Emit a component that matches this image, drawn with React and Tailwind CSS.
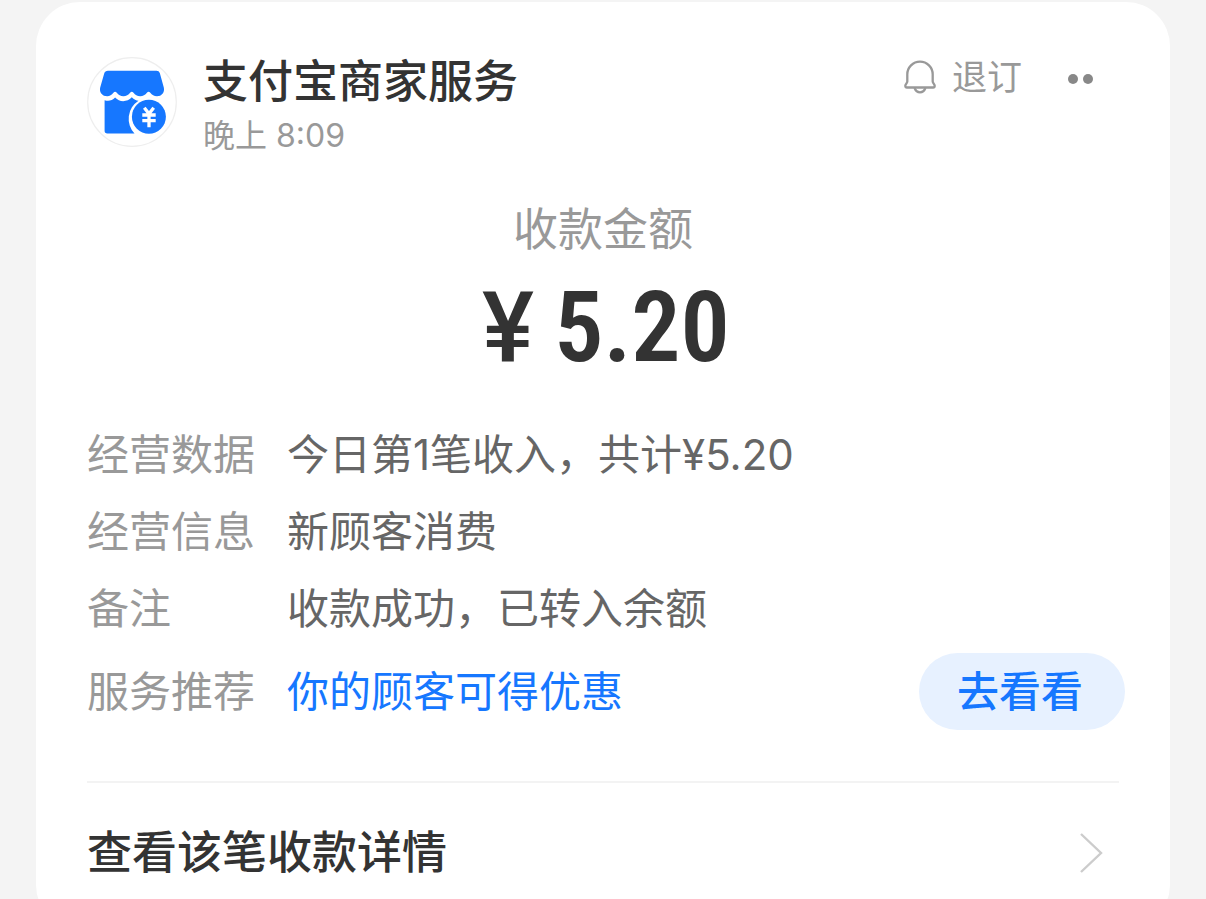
const rows = [
  { label: "经营数据", value: "今日第1笔收入，共计¥5.20" },
  { label: "经营信息", value: "新顾客消费" },
  { label: "备注", value: "收款成功，已转入余额" },
];

function MerchantLogo() {
  return (
    <svg viewBox="0 0 90 90" className="size-[90px] shrink-0" aria-hidden="true">
      <circle cx="45" cy="45" r="44.3" fill="#fff" stroke="#eeeeee" strokeWidth="1.2" />
      <path
        d="M21 13.800H69.500Q72 13.800 72.800 16L76.800 30.500C78 35.500 74.500 39.300 70 39.300C67 39.300 65 37.800 63.300 35.700Q61.600 33.800 59.900 35.700C58.300 37.800 56 39.300 53.200 39.300C50.200 39.300 48.200 37.800 46.500 35.700Q44.800 33.800 43.100 35.700C41.500 37.800 39.200 39.300 36.400 39.300C33.600 39.300 31.500 37.800 29.800 35.700Q28.100 33.800 26.400 35.700C24.700 37.800 22.800 39.300 20.200 39.300C15.500 39.300 12 35.500 13.200 30.500L17.200 16.500Q18 13.800 21 13.800Z"
        fill="#1677ff"
      />
      <path
        d="M17.600 43.200C21.500 44.400 25 43.800 28.100 40.500C32.500 45.400 40 45.400 44.800 40.300C47 42.500 49.200 43.600 51.500 43.700A21.500 21.500 0 0 0 47.500 76.500H20.300Q17.600 76.500 17.600 73.800Z"
        fill="#1677ff"
      />
      <circle cx="61.900" cy="59.700" r="17" fill="#1677ff" />
      <path
        d="M57.300 50.800l4.700 6 4.700-6M55.300 58h13.400M55.300 63.700h13.400M62 56v14.300"
        fill="none"
        stroke="#fff"
        strokeWidth="3.300"
      />
    </svg>
  );
}

function BellIcon() {
  return (
    <svg viewBox="0 0 32 34" className="h-[34px] w-8" fill="none" stroke="currentColor" strokeWidth="2.300" aria-hidden="true">
      <path d="M3.300 21.500V14.300a12.700 12.700 0 0 1 25.400 0v7.200c0 1.600 2 2.600 2 4.300 0 1.200-.6 1.700-1.600 1.700H2.900c-1 0-1.600-.5-1.600-1.700 0-1.700 2-2.700 2-4.300Z" />
      <path d="M10.500 28c1.200 3 3 4.300 5.500 4.300s4.300-1.300 5.500-4.300" />
    </svg>
  );
}

export default function App() {
  return (
    <main className="h-screen overflow-y-auto bg-[#f4f4f4] px-9 pt-[2px] font-['Inter','Noto_Sans_CJK_SC',sans-serif] [scrollbar-width:none]">
      <article className="rounded-[44px] bg-white pr-[45px] pb-[52px] pl-[51px]">
        <header className="flex items-start pt-[55px]">
          <MerchantLogo />
          <div className="ml-[26px] flex-1">
            <h1 className="text-[45px] leading-[50px] font-medium text-[#333]">支付宝商家服务</h1>
            <p className="mt-[7px] text-[32px] leading-[44px] text-[#999]">晚上 8:09</p>
          </div>
          <button type="button" className="flex items-center gap-4 text-[35px] leading-[40px] text-[#999]">
            <BellIcon />
            退订
          </button>
          <button type="button" aria-label="更多" className="mr-8 ml-[46px] flex h-[44px] items-center gap-[5px]">
            <span className="size-[10px] rounded-full bg-[#888]" />
            <span className="size-[10px] rounded-full bg-[#888]" />
          </button>
        </header>

        <section className="mt-12 text-center">
          <h2 className="mr-[6px] text-[45px] leading-[48px] text-[#999]">收款金额</h2>
          <p className="mt-6 flex justify-center gap-5 text-[98px] leading-[100px] font-semibold text-[#333]">
            <span className="font-['Roboto',sans-serif] font-medium">¥</span>
            <span className="font-['Roboto_Condensed','Roboto',sans-serif]">5.20</span>
          </p>
        </section>

        <dl className="mt-[38px] grid grid-cols-[200px_1fr] text-[42px] leading-[77px]">
          {rows.map((row) => (
            <div key={row.label} className="contents">
              <dt className="text-[#999]">{row.label}</dt>
              <dd className="text-[#666]">{row.value}</dd>
            </div>
          ))}
          <dt className="pt-[6px] text-[#999]">服务推荐</dt>
          <dd className="flex items-center justify-between pt-[6px]">
            <a href="#offers" className="text-[#1677ff]">你的顾客可得优惠</a>
            <button type="button" className="rounded-full bg-[#e7f1ff] pr-[42px] pl-[38px] font-medium text-[#1677ff]">去看看</button>
          </dd>
        </dl>

        <a
          href="#detail"
          className="mt-[51px] mr-[6px] flex items-center justify-between border-t-2 border-[#f3f3f3] pt-[46px] pr-[16px] text-[45px] leading-[48px] font-medium text-[#333]"
        >
          查看该笔收款详情
          <svg viewBox="0 0 24 40" className="h-10 w-6" fill="none" stroke="#ccc" strokeWidth="2.400" aria-hidden="true">
            <path d="M2 1l20 19L2 39" />
          </svg>
        </a>
      </article>
    </main>
  );
}
